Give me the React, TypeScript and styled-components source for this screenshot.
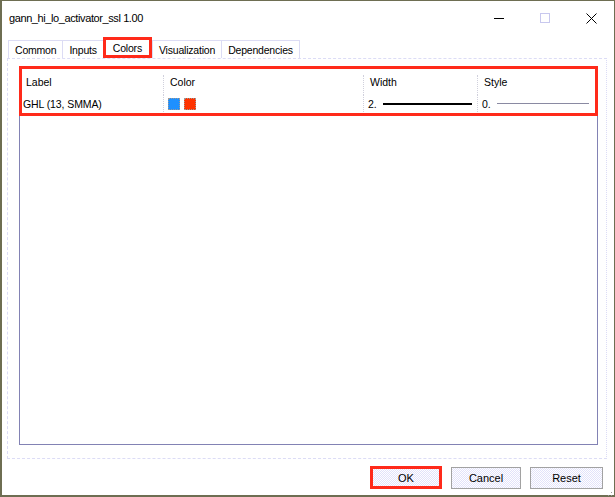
import React from 'react'
import styled, { createGlobalStyle } from 'styled-components'

const GlobalStyle = createGlobalStyle`
  html, body { margin:0; padding:0; background:#ffffff; }
  body { font-family:"Liberation Sans", Arial, sans-serif; }
`

const columns = [
  { title: 'Label', width: 143 },
  { title: 'Color', width: 200 },
  { title: 'Width', width: 114 },
  { title: 'Style', width: 0 },
]

const tabs = ['Common', 'Inputs', 'Colors', 'Visualization', 'Dependencies']

const App = () => {
  return (
    <>
      <GlobalStyle />
      <Window>
        <TitleBar>
          <Title>gann_hi_lo_activator_ssl 1.00</Title>
          <Controls>
            <Control><MinLine /></Control>
            <Control><MaxBox /></Control>
            <Control>
              <svg width="11" height="11" viewBox="0 0 11 11">
                <path d="M0.5 0.5 L10.5 10.5 M10.5 0.5 L0.5 10.5" stroke="#000" strokeWidth="1" />
              </svg>
            </Control>
          </Controls>
        </TitleBar>

        <TabStrip>
          {tabs.map(t => (
            <Tab key={t} $active={t === 'Colors'}>{t}</Tab>
          ))}
        </TabStrip>

        <Panel>
          <List>
            <Highlight />
            <HeaderRow>
              {columns.map((c, i) => (
                <HeadCell key={c.title} $width={c.width} $first={i === 0}>{c.title}</HeadCell>
              ))}
            </HeaderRow>
            <Row>
              <Cell $width={143} $first>GHL (13, SMMA)</Cell>
              <Cell $width={200}>
                <Swatch $color="#1e90ff" />
                <Swatch $color="#ff3300" />
              </Cell>
              <Cell $width={114}>
                2.<Line $thick />
              </Cell>
              <Cell $width={0}>
                0.<Line />
              </Cell>
            </Row>
          </List>
        </Panel>

        <Footer>
          <Button $width={72} $marked>OK</Button>
          <Button $width={70}>Cancel</Button>
          <Button $width={73}>Reset</Button>
        </Footer>
        <Grip>
          <svg width="9" height="9" viewBox="0 0 9 9">
            <rect x="7" y="1" width="1" height="1" fill="#9a9a9a" />
            <rect x="4" y="4" width="1" height="1" fill="#9a9a9a" />
            <rect x="7" y="4" width="1" height="1" fill="#9a9a9a" />
            <rect x="1" y="7" width="1" height="1" fill="#9a9a9a" />
            <rect x="4" y="7" width="1" height="1" fill="#9a9a9a" />
            <rect x="7" y="7" width="1" height="1" fill="#9a9a9a" />
          </svg>
        </Grip>
      </Window>
    </>
  )
}

export default App

const Window = styled.div`
  position:relative;
  width:615px;
  height:497px;
  box-sizing:border-box;
  border:1px solid #6e6e52;
  border-left:2px solid #6e6e52;
  border-bottom:2px solid #6e6e52;
  background:#ffffff;
  display:flex;
  flex-direction:column;
  color:#000;
`

const TitleBar = styled.div`
  height:34px;
  display:flex;
  align-items:center;
  justify-content:space-between;
`

const Title = styled.div`
  padding-left:7px;
  font-size:11px;
  letter-spacing:-0.4px;
`

const Controls = styled.div`
  display:flex;
  height:100%;
`

const Control = styled.div`
  width:46px;
  display:flex;
  align-items:center;
  justify-content:center;
`

const MinLine = styled.div`
  width:10px;
  height:1px;
  background:#000;
`

const MaxBox = styled.div`
  width:8px;
  height:8px;
  border:1px solid #c8c8ee;
`

const TabStrip = styled.div`
  display:flex;
  align-items:flex-end;
  padding:5px 0 0 6px;
  height:18px;
`

const Tab = styled.div<{ $active?: boolean }>`
  box-sizing:border-box;
  height:${p => (p.$active ? '21px' : '18px')};
  padding:${p => (p.$active ? '0 7px' : '0 6px')};
  display:flex;
  align-items:center;
  font-size:10.5px;
  letter-spacing:-0.2px;
  border:${p => (p.$active ? '3px solid #ff2a1a' : '1px solid #dcdcf4')};
  border-bottom:${p => (p.$active ? '3px solid #ff2a1a' : 'none')};
  border-right:${p => (p.$active ? '3px solid #ff2a1a' : 'none')};
  background:#fff;
  &:nth-child(5) { border-right:1px solid #dcdcf4; }
`

const Panel = styled.div`
  margin-left:5px;
  width:600px;
  height:401px;
  box-sizing:border-box;
  border:1px dashed #dcdcf6;
  border-right:1px dotted #dcdcf6;
  padding:7px 8px 13px 11px;
  display:flex;
`

const List = styled.div`
  position:relative;
  flex:1;
  border:1px solid #8282b4;
  display:flex;
  flex-direction:column;
`

const Highlight = styled.div`
  position:absolute;
  top:-1px;
  left:-1px;
  right:-1px;
  height:50px;
  box-sizing:border-box;
  border:3px solid #ff2a1a;
  pointer-events:none;
`

const HeaderRow = styled.div`
  display:flex;
  height:28px;
  align-items:flex-end;
`

const HeadCell = styled.div<{ $width: number; $first?: boolean }>`
  box-sizing:border-box;
  ${p => (p.$width ? `width:${p.$width}px;` : 'flex:1;')}
  height:20px;
  padding:0 0 6px 6px;
  font-size:10.5px;
  display:flex;
  align-items:center;
  border-left:${p => (p.$first ? 'none' : '1px dotted #d0d0dc')};
`

const Row = styled.div`
  display:flex;
  height:17px;
`

const Cell = styled.div<{ $width: number; $first?: boolean }>`
  box-sizing:border-box;
  ${p => (p.$width ? `width:${p.$width}px;` : 'flex:1;')}
  padding-left:${p => (p.$first ? '3px' : '4px')};
  font-size:10.5px;
  letter-spacing:-0.1px;
  display:flex;
  align-items:center;
  gap:4px;
  border-left:${p => (p.$first ? 'none' : '1px dotted #d0d0dc')};
`

const Swatch = styled.div<{ $color: string }>`
  width:10px;
  height:10px;
  border:1px dotted #9a9a9a;
  background:${p => p.$color};
`

const Line = styled.div<{ $thick?: boolean }>`
  width:${p => (p.$thick ? '89px' : '92px')};
  height:${p => (p.$thick ? '2px' : '1px')};
  margin-left:2px;
  background:${p => (p.$thick ? '#000' : '#8a8aa2')};
`

const Footer = styled.div`
  display:flex;
  justify-content:flex-end;
  align-items:center;
  gap:9px;
  padding:7px 11px 0 0;
`

const Button = styled.div<{ $width: number; $marked?: boolean }>`
  box-sizing:border-box;
  width:${p => p.$width}px;
  height:${p => (p.$marked ? '23px' : '22px')};
  display:flex;
  align-items:center;
  justify-content:center;
  font-size:11px;
  border:${p => (p.$marked ? '3px solid #ff2a1a' : '1px solid #a2a2a2')};
  background:repeating-conic-gradient(#e2e2fa 0 25%, #ffffff 0 50%) 0 0/2px 2px;
`

const Grip = styled.div`
  position:absolute;
  right:1px;
  bottom:0;
  width:9px;
  height:9px;
`
